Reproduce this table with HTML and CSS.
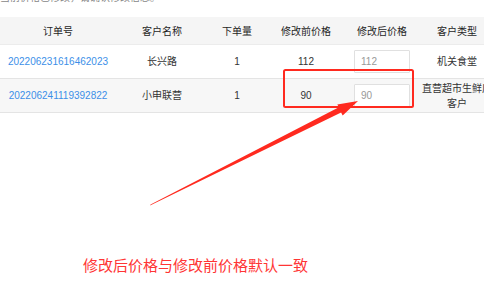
FILE: index.html
```html
<!DOCTYPE html>
<html lang="zh-CN">
<head>
<meta charset="utf-8">
<title>订单价格修改</title>
<link rel="stylesheet" href="styles.css">
</head>
<body>
<div class="page">
  <p class="note">当前价格已修改，请确认修改信息。</p>
  <table class="orders">
    <colgroup>
      <col class="c-no"><col class="c-name"><col class="c-qty"><col class="c-old"><col class="c-new"><col class="c-type">
    </colgroup>
    <thead>
      <tr><th>订单号</th><th>客户名称</th><th>下单量</th><th>修改前价格</th><th>修改后价格</th><th>客户类型</th></tr>
    </thead>
    <tbody>
      <tr>
        <td><a class="link" href="#">202206231616462023</a></td>
        <td>长兴路</td>
        <td>1</td>
        <td>112</td>
        <td><input class="price" type="text" value="112"></td>
        <td>机关食堂</td>
      </tr>
      <tr class="alt">
        <td><a class="link" href="#">202206241119392822</a></td>
        <td>小申联营</td>
        <td>1</td>
        <td>90</td>
        <td><input class="price" type="text" value="90"></td>
        <td>直营超市生鲜店客户</td>
      </tr>
    </tbody>
  </table>
  <p class="caption">修改后价格与修改前价格默认一致</p>

  <!-- annotation layer: highlight box and pointer arrow -->
  <svg class="marks" width="484" height="300" viewBox="0 0 484 300" aria-hidden="true">
    <rect x="284" y="79" width="129" height="37" rx="1.5" fill="none" stroke="#ff2a1f" stroke-width="2"/>
    <polygon fill="#ff2a1f" points="150,214.5 150.6,213.6 338.9,116.3 337.3,113.6 358,110 342.7,124.4 341.1,121.6"/>
  </svg>
</div>
</body>
</html>
```
FILE: styles.css
```css
html, body {
  margin: 0;
  padding: 0;
  overflow: hidden;
  background: #fff;
}

.page {
  position: relative;
  width: 484px;
  height: 300px;
  font-family: "Liberation Sans", "Noto Sans CJK SC", sans-serif;
  font-size: 10px;
  color: #333;
}

.note {
  margin: -9px 0 0 0;
  height: 14px;
  line-height: 14px;
  font-size: 10px;
  color: #888;
}

.orders {
  margin-top: 12px;
  width: 496px;
  border-collapse: collapse;
  table-layout: fixed;
}

.c-no { width: 116px; }
.c-name { width: 92px; }
.c-qty { width: 58px; }
.c-old { width: 80px; }
.c-new { width: 72px; }
.c-type { width: 78px; }

.orders th {
  height: 27px;
  padding: 0;
  background: #f5f5f5;
  font-weight: normal;
  color: #1f1f1f;
  text-align: center;
  border-bottom: 1px solid #ececec;
}

.orders td {
  height: 33px;
  padding: 0 4px;
  text-align: center;
  border-bottom: 1px solid #e4e4e4;
  line-height: 15px;
}

.orders tr.alt td {
  background: #f7f7f7;
}

.link {
  color: #3c8fe8;
  text-decoration: none;
}

.price {
  box-sizing: border-box;
  width: 56px;
  height: 23px;
  margin: 0;
  padding: 0 0 0 6px;
  border: 1px solid #e0e0e0;
  border-radius: 1px;
  background: #fff;
  font: inherit;
  color: #999;
  vertical-align: middle;
}

.caption {
  margin: 143px 0 0 83px;
  font-size: 15px;
  line-height: 20px;
  color: #ff3535;
}

.marks {
  position: absolute;
  left: 0;
  top: 0;
  pointer-events: none;
}
```
